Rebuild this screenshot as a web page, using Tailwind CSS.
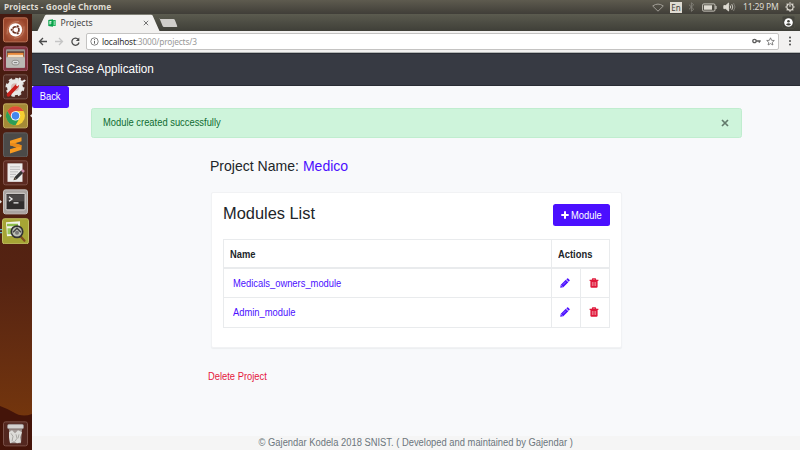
<!DOCTYPE html>
<html lang="en">
<head>
<meta charset="utf-8">
<title>Projects</title>
<script src="https://cdn.jsdelivr.net/npm/@tailwindcss/browser@4"></script>
</head>
<body class="w-[800px] h-[450px] overflow-hidden flex flex-col font-['Liberation_Sans',Arial,sans-serif] text-[10px] text-[#212529]">
<svg class="hidden">
  <symbol id="pencil" viewBox="0 0 10 10"><path d="M.2 9.800.8 6.800 5.800 1.800 8.300 4.300 3.300 9.200zM6.300 1.300 7.200.4q.5-.4.900 0l1.500 1.500q.4.400 0 .9l-.9.900z" fill="#4b0fff"/><path d="m1.300 7.500 1.200 1.200" stroke="#fff" stroke-width=".7"/><path d="m2.900 6.700 3-3" stroke="#fff" stroke-width=".4"/></symbol>
  <symbol id="trash" viewBox="0 0 10 10"><path d="M.6 2.400h8.800M3.200 2.300 3.700.9h2.600l.5 1.400" fill="none" stroke="#df1739" stroke-width="1.200"/><path d="M1.400 2.500h7.200v6q0 1.200-1.100 1.200h-5q-1.100 0-1.100-1.200z" fill="#df1739"/><path d="M3.400 4v4M5 4v4M6.600 4v4" stroke="#f6bfc8" stroke-width=".6"/></symbol>
</svg>
<!-- system bar -->
<header class="h-[14px] shrink-0 flex items-center bg-linear-to-b from-[#5e5b4f] to-[#403e38] text-[#dfdbd2] font-['Noto_Sans',sans-serif] pl-[4px] pr-[5px]">
  <span class="font-bold text-[8.3px] tracking-[.14px] leading-[14px] w-[120px] whitespace-nowrap">Projects - Google Chrome</span>
  <div class="ml-auto flex items-center">
    <svg class="w-[12px] h-[9px] mr-[6px]" viewBox="0 0 12 9" fill="none" stroke="#aaa79f" stroke-width=".9"><path d="M.7 3Q6-.8 11.3 3L6 8.2Z"/></svg>
    <span class="w-[12px] h-[11px] bg-[#dfdbd2] text-[#45433c] text-[8px] leading-[11px] text-center mr-[6px]">En</span>
    <svg class="w-[7px] h-[10px] mr-[7px]" viewBox="0 0 7 10" fill="none" stroke="#85827a" stroke-width=".9"><path d="M1 2.7 5.7 7.2 3.4 9.3V.7L5.7 2.8 1 7.3"/></svg>
    <svg class="w-[15px] h-[9px] mr-[6px]" viewBox="0 0 15 9"><rect x=".6" y=".9" width="12.4" height="7.2" rx="1.2" fill="none" stroke="#c8c5bc"/><path d="M2 2.3h8v4.4H2z" fill="#dfdbd2"/><path d="M13.4 3h1.2v3h-1.2z" fill="#c8c5bc"/></svg>
    <svg class="w-[13px] h-[10px] mr-[7px]" viewBox="0 0 13 10" fill="none" stroke="#dfdbd2" stroke-width=".9"><path d="M.8 3.6h2L5.6 1v8L2.8 6.6h-2z" fill="#dfdbd2"/><path d="M7.2 3.5q1 1.5 0 3M8.8 2.2q2 2.8 0 5.6"/><path d="M10.5 1q3 4 0 8" stroke="#85827a"/></svg>
    <span class="text-[8.6px] leading-[14px] w-[36px] mr-[6px] whitespace-nowrap tracking-[-.2px]">11:29 PM</span>
    <svg class="w-[10px] h-[10px]" viewBox="0 0 10 10" fill="none" stroke="#dfdbd2"><circle cx="5" cy="5" r="3.1" stroke-width="1.1"/><path d="M5 1v4" stroke="#4b4941" stroke-width="2.4"/><path d="M5 .3v4.5" stroke-width="1.2"/><path d="M.3 5h1.5M8.2 5h1.5M5 8.2v1.5M1.7 1.7l1.1 1.1M7.2 7.2l1.1 1.1M1.7 8.3l1.1-1.1M7.2 2.8l1.1-1.1" stroke-width="1.2"/></svg>
  </div>
</header>
<div class="flex h-[436px]">
  <!-- launcher -->
  <aside class="relative w-[32px] shrink-0 bg-linear-to-b from-[#451a10] via-[#552312] via-60% to-[#7b3a0a] flex flex-col items-center pt-[3px] gap-[3px] pr-[1px]">
    <svg class="absolute left-0 bottom-0 w-[32px] h-[44px]" viewBox="0 0 32 44" preserveAspectRatio="none"><path d="M0 0Q8 3 13 6 22 12 32 8V44H0Z" fill="#441409"/></svg>
    <svg class="absolute left-0 top-0 w-[32px] h-[225px]" viewBox="0 0 32 225" fill="#e5e2df"><path d="M0 42.500l2 1.700-2 1.700zM0 100l2 1.700-2 1.700zM0 186l2 1.700-2 1.700zM32 100l-2 1.700 2 1.700z"/><path d="M0 215h2v1.200H0zM0 218h2v1.200H0z" fill="#60b5d0"/></svg>
    <svg class="w-[25px] h-[25.700px] shrink-0" viewBox="0 0 25 25"><defs><radialGradient id="ub"><stop stop-color="#ca8061"/><stop offset="1" stop-color="#9a452b"/></radialGradient></defs><rect x=".5" y=".5" width="24" height="24" rx="2" fill="url(#ub)" stroke="#bd7557"/><path d="M4 17Q4 4 16 4M21 9q1 11-10 12" fill="none" stroke="#d09a80" stroke-opacity=".5"/><circle cx="12.500" cy="12.500" r="6.700" fill="#fff"/><circle cx="12.800" cy="12.500" r="3.200" fill="none" stroke="#6b2f1e" stroke-width="1.500"/><g fill="#6b2f1e" stroke="#fff" stroke-width=".6"><circle cx="8.800" cy="12.500" r="1.400"/><circle cx="14.700" cy="9" r="1.400"/><circle cx="14.700" cy="16" r="1.400"/></g></svg>
    <svg class="w-[25px] h-[25.700px] shrink-0" viewBox="0 0 25 25"><rect x=".5" y=".5" width="24" height="24" rx="2" fill="#803341" stroke="#a05a68"/><rect x="3" y="3" width="19" height="18.500" rx="1" fill="#989691"/><path d="M4 5h17v5H4z" fill="#5d4038"/><path d="M4.500 6.500h16V11h-16z" fill="#e8893a"/><path d="M5 8.500h15v2.500H5z" fill="#f3ddc0"/><rect x="3" y="11" width="19" height="10.500" rx="1" fill="#bbb9b5"/><rect x="9" y="14" width="7" height="4.500" rx="2" fill="#ddd" stroke="#85827e" stroke-width=".8"/><path d="M10.800 16.300h3.400" stroke="#777"/></svg>
    <svg class="w-[25px] h-[25.700px] shrink-0" viewBox="0 0 25 25"><rect x=".5" y=".5" width="24" height="24" rx="2" fill="#512a22" stroke="#76564d"/><circle cx="12" cy="13" r="8" fill="none" stroke="#e2e2e0" stroke-width="3" stroke-dasharray="3.400 2.880"/><circle cx="12" cy="13" r="6" fill="#d8bdb8" stroke="#e8e8e6" stroke-width="4"/><path d="M5.500 20.500 14 11.500" stroke="#c9201b" stroke-width="3.700" stroke-linecap="round"/><path d="m13.500 11.500 5-5" stroke="#eee" stroke-width="2.200"/><path d="M17 3.500q-1 4 1.500 4T22 5.500" fill="none" stroke="#eee" stroke-width="2"/></svg>
    <svg class="w-[25px] h-[25.700px] shrink-0" viewBox="0 0 25 25"><rect x=".5" y=".5" width="24" height="24" rx="2" fill="#a58a36" stroke="#c4ae62"/><circle cx="12.500" cy="12.500" r="9.500" fill="#f5ce32"/><path d="M4.270 7.750A9.500 9.500 0 0 1 20.730 7.750H12.500L8.390 14.880Z" fill="#df4a3a"/><path d="M4.270 7.750A9.500 9.500 0 0 0 12.500 22L16.610 14.880H8.390Z" fill="#2e9e57"/><circle cx="12.500" cy="12.500" r="4.700" fill="#fff"/><circle cx="12.500" cy="12.500" r="3.800" fill="#4387ee"/></svg>
    <svg class="w-[25px] h-[25.700px] shrink-0" viewBox="0 0 25 25"><rect x=".5" y=".5" width="24" height="24" rx="2" fill="#4b4a48" stroke="#626060"/><path d="M18.500 5 7 8.500V13l6.500 2-6.500 2v4.200l11.500-3.700V13L12 11l6.500-2Z" fill="#f79b21"/><path d="M7 11v2l6.500 2 5-.5V13L12 11Z" fill="#e88a1b"/></svg>
    <svg class="w-[25px] h-[25.700px] shrink-0" viewBox="0 0 25 25"><rect x=".5" y=".5" width="24" height="24" rx="2" fill="#5c2a21" stroke="#7d5047"/><path d="M4.500 3h15v18.500h-15z" fill="#ecebea"/><path d="M7 6.500h10M7 9h10M7 11.500h8M7 14h6M7 16.500h4" stroke="#b8b8b8" stroke-width=".9"/><path d="m12.500 18 7-7" stroke="#353535" stroke-width="3"/><path d="m19 11.500 1.800-1.800" stroke="#ca8eaa" stroke-width="3"/><path d="m10.500 20 .8-3 2.200 2.200z" fill="#4c4030"/></svg>
    <svg class="w-[25px] h-[25.700px] shrink-0" viewBox="0 0 25 25"><rect x=".5" y=".5" width="24" height="24" rx="2" fill="#a9a3a0" stroke="#c5c0be"/><rect x="3" y="4" width="19" height="16.500" rx="1" fill="#302d2d" stroke="#dedbd9"/><path d="M4 5h17v7H4z" fill="#4b4747"/><path d="m6 7.500 3 2.200-3 2.200M10.500 13.500h5" fill="none" stroke="#eee" stroke-width="1.300"/></svg>
    <svg class="w-[27px] h-[26.500px] shrink-0" viewBox="0 0 27 26"><rect x=".5" y=".5" width="26" height="25" rx="2" fill="#a6a535" stroke="#c3c264"/><path d="m4 4 14-1v14L5 18z" fill="#f1f3e8"/><path d="M5 5.500h11V8H5z" fill="#8cbd4b"/><path d="M5.500 10h4v6h-4z" fill="#9ac65b"/><path d="m18.500 18 4 4.500" stroke="#804d20" stroke-width="2.200" stroke-linecap="round"/><circle cx="15" cy="13.500" r="5.700" fill="#bec2b6" stroke="#333" stroke-width="1.700"/><path d="m11 14 4-4 4 4" fill="none" stroke="#444" stroke-width="1.500"/><circle cx="15" cy="14.500" r="2" fill="#777"/></svg>
    <svg class="relative w-[25px] h-[25.700px] shrink-0 mt-auto mb-[3px]" viewBox="0 0 25 25"><rect x=".5" y=".5" width="24" height="24" rx="2" fill="#53271f" stroke="#795047"/><path d="m6 8 1 14h11l1-14z" fill="#a19895"/><rect x="4.500" y="3" width="16" height="4.500" rx="1.500" fill="#d3d0ce" stroke="#969190" stroke-width=".7"/><path d="m6 11 3-2 3 3 3-3 4 2-2 5 1 5-4 1-3-2-4 2-1-6z" fill="#dddcd9"/><path d="m8 12 2 3-1 5m4-7 1 4-2 3m4-7-1 4" fill="none" stroke="#92908d" stroke-width=".7"/></svg>
  </aside>
  <main class="flex-1 flex flex-col bg-[#f8f9fb]">
    <!-- tab strip -->
    <div class="h-[17px] shrink-0 relative flex items-center bg-linear-to-b from-[#5b5b4f] to-[#3f3f38] font-['Noto_Sans',sans-serif]">
      <svg class="absolute left-0 top-0 w-[160px] h-[17px]" viewBox="0 0 160 17"><path d="M5.500 17 13 1.500Q13.500.700 14.500.700H119q1.200 0 1.600.9L127.500 17Z" fill="#f2f1f0"/><path d="M128 5h13.500q1 0 1.400.9l2.300 6q.4 1-.7 1H132q-1 0-1.400-.9l-2.800-7q-.3-1 .2-1Z" fill="#cfcdca"/></svg>
      <svg class="relative w-[8px] h-[8px] ml-[16px]" viewBox="0 0 8 8"><path d="M.3 1 5 .2v7.600L.3 7z" fill="#0aa14b"/><path d="M5 1h2.700v6H5z" fill="#20b55c"/><path d="M1.500 2.500h2M1.500 4h2M2 2.500v3M5.700 3h1.300M5.700 5h1.300" stroke="#fff" stroke-width=".8"/></svg>
      <span class="relative ml-[4.500px] pt-[1px] text-[8.600px] leading-[17px] text-[#444] w-[82px]">Projects</span>
      <svg class="relative w-[6px] h-[6px]" viewBox="0 0 6 6" stroke="#666" stroke-width=".9"><path d="m.8.800 4.400 4.400M5.200.800.800 5.200"/></svg>
      <span class="relative ml-auto mr-[5px] w-[13px] h-[13px] rounded-[2px] border border-[#4b4b43] bg-[#44443c] flex items-center justify-center"><svg class="w-[9px] h-[9px] shrink-0" viewBox="0 0 9 9"><circle cx="4.500" cy="4.500" r="4.300" fill="#fff"/><circle cx="4.500" cy="3.200" r="1.300" fill="#44443c"/><path d="M1.900 6.200q2.600-2 5.200 0-2.600 2.700-5.200 0Z" fill="#44443c"/></svg></span>
    </div>
    <!-- address bar -->
    <div class="h-[21.500px] shrink-0 flex items-center bg-[#f2f1f0] border-b border-[#b3b6b5] pl-[6px] pr-[8px] font-['Noto_Sans',sans-serif]">
      <svg class="w-[43px] h-[11px] shrink-0" viewBox="0 0 43 11" fill="none" stroke="#4b4b4b" stroke-width="1.300"><path d="M9 5.500H1.500M5 2 1.500 5.500 5 9"/><path d="M17 5.500h7.500M21 2l3.500 3.500L21 9" stroke="#c5c5c5"/><path d="M40.300 3.400A3.600 3.600 0 1 0 41 6.500"/><path d="M41.300 1.400v3.500h-3.500z" fill="#4b4b4b" stroke="none"/></svg>
      <div class="ml-[5px] flex-1 h-[17px] bg-white border border-[#c4c3c2] rounded-[2px] flex items-center pl-[3px] pr-[3px]">
        <svg class="w-[9px] h-[9px] shrink-0" viewBox="0 0 9 9" fill="none" stroke="#666"><circle cx="4.500" cy="4.500" r="3.700" stroke-width=".8"/><path d="M4.500 4v2.700M4.500 2.200v1" /></svg>
        <span class="ml-[3px] text-[8.400px] leading-[15px] text-[#999] whitespace-nowrap tracking-[-.18px]"><span class="text-[#333]">localhost</span>:3000/projects/3</span>
        <svg class="ml-auto w-[9px] h-[6px]" viewBox="0 0 9 6" fill="none" stroke="#5b5b5b"><circle cx="2.500" cy="3" r="1.700" stroke-width="1.300"/><path d="M4.200 3h4.500M7.300 3v1.800" stroke-width="1.300"/></svg>
        <svg class="ml-[5.500px] w-[9px] h-[9px]" viewBox="0 0 9 9" fill="none" stroke="#666" stroke-width=".8"><path d="m4.500.8 1.100 2.500 2.700.2-2 1.800.6 2.700-2.400-1.400L2.100 8l.6-2.700-2-1.800 2.700-.2z"/></svg>
      </div>
      <svg class="ml-[9px] w-[4px] h-[10px]" viewBox="0 0 4 10" fill="#4b4b4b"><circle cx="2" cy="1.500" r="1"/><circle cx="2" cy="5" r="1"/><circle cx="2" cy="8.500" r="1"/></svg>
    </div>
    <!-- page -->
    <nav class="h-[33px] shrink-0 bg-[#373a43] border-y border-y-[#292c34] flex items-center pl-[9.500px] text-white text-[12px]"><span class="origin-left scale-x-[.975]">Test Case Application</span></nav>
    <div class="flex h-[22px] shrink-0"><a class="w-[37px] h-[22px] rounded-[2.500px] bg-[#4b0fff] text-white flex items-center justify-center"><span class="scale-x-[.937]">Back</span></a></div>
    <div class="ml-[59px] w-[651px] h-[30px] shrink-0 rounded-[2.500px] border border-[#c0edcf] bg-[#cef4db] text-[#0e6c32] flex items-center justify-between pl-[11px] pr-[12px]"><span class="origin-left scale-x-[.937]">Module created successfully</span><svg class="w-[8px] h-[8px]" viewBox="0 0 8 8" stroke="#62796b" stroke-width="1.700"><path d="m1 1 6 6M7 1 1 7"/></svg></div>
    <h2 class="ml-[178px] mt-[19px] h-[18px] leading-[18px] text-[14.400px] shrink-0 origin-left scale-x-[.976]">Project Name: <span class="text-[#4b0fff]">Medico</span></h2>
    <section class="ml-[179px] mt-[17.500px] w-[411px] h-[156px] shrink-0 bg-white rounded-[2px] border border-[#f1f2f4] shadow-[0_1px_1px_#eceef0] px-[11px] pt-[11px]">
      <div class="flex justify-between items-start"><h3 class="text-[16.400px] leading-[19px]">Modules List</h3>
        <a class="w-[57px] h-[22px] rounded-[2.500px] bg-[#4b0fff] text-white flex items-center pl-[8px] gap-[2px]"><svg class="w-[8px] h-[8px]" viewBox="0 0 8 8" stroke="#fff" stroke-width="2"><path d="M4 .3v7.400M.3 4h7.400"/></svg><span class="origin-left scale-x-[.937]">Module</span></a></div>
      <div class="mt-[13px] w-[387px] border border-[#e9ebed] grid grid-cols-[326.500px_29px_1fr]">
        <div class="h-[29px] border-b-2 border-[#e9ebed] flex items-center pl-[6px] pt-[1px] font-bold"><span class="origin-left scale-x-[.937]">Name</span></div>
        <div class="col-span-2 h-[29px] border-b-2 border-l border-[#e9ebed] flex items-center pl-[6.500px] pt-[1px] font-bold"><span class="origin-left scale-x-[.937]">Actions</span></div>
        <div class="h-[29px] border-b border-[#e9ebed] flex items-center pl-[9px] text-[#4b0fff]"><span class="origin-left scale-x-[.937]">Medicals_owners_module</span></div>
        <div class="border-b border-l border-[#e9ebed] flex items-center justify-center pr-[1px]"><svg class="w-[10px] h-[10px]"><use href="#pencil"/></svg></div>
        <div class="border-b border-l border-[#e9ebed] flex items-center justify-center pr-[1px]"><svg class="w-[10px] h-[10px]"><use href="#trash"/></svg></div>
        <div class="h-[28.500px] flex items-center pl-[9px] text-[#4b0fff]"><span class="origin-left scale-x-[.937]">Admin_module</span></div>
        <div class="border-l border-[#e9ebed] flex items-center justify-center pr-[1px]"><svg class="w-[10px] h-[10px]"><use href="#pencil"/></svg></div>
        <div class="border-l border-[#e9ebed] flex items-center justify-center pr-[1px]"><svg class="w-[10px] h-[10px]"><use href="#trash"/></svg></div>
      </div>
    </section>
    <a class="ml-[175.700px] mt-[22px] h-[14px] leading-[14px] text-[#e5173b] shrink-0 origin-left scale-x-[.937]">Delete Project</a>
    <footer class="mt-auto h-[14px] shrink-0 bg-[#f5f5f5] text-[#6c757d] text-center leading-[14px]"><span class="inline-block scale-x-[.937]">© Gajendar Kodela 2018 SNIST. ( Developed and maintained by Gajendar )</span></footer>
  </main>
</div>
</body>
</html>
